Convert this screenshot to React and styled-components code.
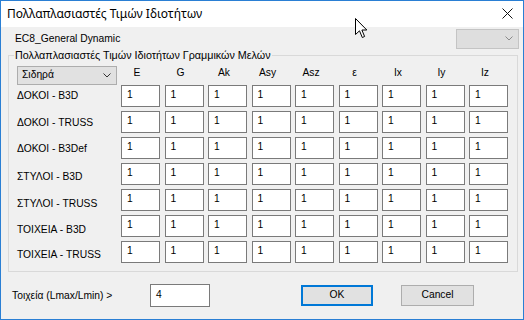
import React from "react";
import styled, { createGlobalStyle } from "styled-components";

const GlobalStyle = createGlobalStyle`
  html, body { margin: 0; padding: 0; background: #ffffff; }
  *, *::before, *::after { box-sizing: border-box; }
`;

const COLS = "99.5px repeat(9, 39px)";

const Window = styled.div`
  position: relative;
  width: 524px;
  height: 320px;
  border: 1px solid #2a7fd4;
  background: #f0f0f0;
  display: flex;
  flex-direction: column;
  font-family: "Liberation Sans", Arial, sans-serif;
  font-size: 10.3px;
  line-height: 12px;
  color: #000;
  overflow: hidden;
`;

const TitleBar = styled.div`
  height: 26px;
  flex: none;
  background: #ffffff;
  display: flex;
  align-items: center;
  justify-content: space-between;
  padding: 0 10px 1px 6px;
  font-family: "Noto Sans", "Open Sans", sans-serif;
  font-size: 12px;
`;

const Body = styled.div`
  flex: 1;
  display: flex;
  flex-direction: column;
  padding: 2px 4px 0 7px;
`;

const TopRow = styled.div`
  height: 20px;
  display: flex;
  align-items: center;
  justify-content: space-between;
  padding-left: 7px;
`;

const Combo = styled.div`
  width: ${(p) => p.$w}px;
  height: ${(p) => p.$h}px;
  display: flex;
  align-items: center;
  justify-content: space-between;
  padding: 0 5px 1px 4px;
  background: ${(p) => (p.$disabled ? "#dedede" : "#e1e1e1")};
  border: 1px solid ${(p) => (p.$disabled ? "#c4c4c4" : "#adadad")};
  color: #000;
`;

const Group = styled.fieldset`
  margin: 0;
  width: 510px;
  min-width: 0;
  border: 1px solid #d9d9d9;
  padding: 5px 8px 8px 8px;
`;

const Legend = styled.legend`
  margin-left: -3px;
  padding: 0 1px;
  font-size: 10.75px;
  line-height: 12px;
`;

const HeaderGrid = styled.div`
  display: grid;
  grid-template-columns: ${COLS};
  column-gap: 4.5px;
  height: 19px;
`;

const ColHead = styled.div`
  text-align: center;
  padding: 1px 7px 0 0;
`;

const RowsGrid = styled.div`
  display: grid;
  grid-template-columns: ${COLS};
  grid-auto-rows: 22px;
  column-gap: 4.5px;
  row-gap: 4px;
`;

const RowLabel = styled.div`
  align-self: start;
  margin-top: ${(p) => p.$top}px;
  white-space: nowrap;
`;

const Cell = styled.div`
  height: ${(p) => p.$h || 22}px;
  width: ${(p) => p.$w || 39}px;
  background: #ffffff;
  border: 1px solid #7a7a7a;
  display: flex;
  align-items: center;
  padding: 0 0 2px 5px;
`;

const BottomRow = styled.div`
  margin-top: 12px;
  display: flex;
  align-items: center;
  height: 23px;
  padding-left: 4px;
`;

const BottomLabel = styled.div`
  width: 138px;
  padding-top: 1px;
`;

const Button = styled.div`
  width: ${(p) => p.$w}px;
  height: 21px;
  margin-left: ${(p) => p.$ml}px;
  display: flex;
  align-items: center;
  justify-content: center;
  background: #e1e1e1;
  border: ${(p) => (p.$default ? "2px solid #0078d7" : "1px solid #adadad")};
  padding-bottom: 1px;
`;

const Cursor = styled.svg`
  position: absolute;
  left: 354px;
  top: 17px;
`;

const Chevron = ({ color }) => (
  <svg width="8" height="5" viewBox="0 0 8 5">
    <path d="M0.5 0.5 L4 4 L7.5 0.5" fill="none" stroke={color} strokeWidth="1" />
  </svg>
);

const heads = ["E", "G", "Ak", "Asy", "Asz", "ε", "Ix", "Iy", "Iz"];
const rows = [
  { name: "ΔΟΚΟΙ - B3D", top: 5 },
  { name: "ΔΟΚΟΙ - TRUSS", top: 6 },
  { name: "ΔΟΚΟΙ - B3Def", top: 6 },
  { name: "ΣΤΥΛΟΙ - B3D", top: 8 },
  { name: "ΣΤΥΛΟΙ - TRUSS", top: 9 },
  { name: "ΤΟΙΧΕΙΑ - B3D", top: 9 },
  { name: "ΤΟΙΧΕΙΑ - TRUSS", top: 8 },
];

export default function App() {
  return (
    <>
      <GlobalStyle />
      <Window>
        <TitleBar>
          <span>Πολλαπλασιαστές Τιμών Ιδιοτήτων</span>
          <svg width="11" height="11" viewBox="0 0 11 11">
            <path d="M0.5 0.5 L10.5 10.5 M10.5 0.5 L0.5 10.5" stroke="#111" strokeWidth="1" />
          </svg>
        </TitleBar>
        <Body>
          <TopRow>
            <span>EC8_General Dynamic</span>
            <Combo $w={63} $h={20} $disabled>
              <span />
              <Chevron color="#8a8a8a" />
            </Combo>
          </TopRow>
          <Group>
            <Legend>Πολλαπλασιαστές Τιμών Ιδιοτήτων Γραμμικών Μελών</Legend>
            <HeaderGrid>
              <Combo $w={100} $h={19}>
                <span>Σιδηρά</span>
                <Chevron color="#333" />
              </Combo>
              {heads.map((h) => (
                <ColHead key={h}>{h}</ColHead>
              ))}
            </HeaderGrid>
            <RowsGrid>
              {rows.map((r) => (
                <React.Fragment key={r.name}>
                  <RowLabel $top={r.top}>{r.name}</RowLabel>
                  {heads.map((h) => (
                    <Cell key={h}>1</Cell>
                  ))}
                </React.Fragment>
              ))}
            </RowsGrid>
          </Group>
          <BottomRow>
            <BottomLabel>Τοιχεία (Lmax/Lmin) &gt;</BottomLabel>
            <Cell $w={60} $h={23}>4</Cell>
            <Button $w={72} $ml={91} $default>OK</Button>
            <Button $w={73} $ml={28}>Cancel</Button>
          </BottomRow>
        </Body>
        <Cursor width="13" height="21" viewBox="0 0 13 21">
          <path
            d="M0.5 0.5 V16.5 L4.5 12.8 L7.3 19.5 L9.6 18.5 L6.9 12 H11.8 Z"
            fill="#fff"
            stroke="#000"
            strokeWidth="1"
            strokeLinejoin="miter"
          />
        </Cursor>
      </Window>
    </>
  );
}
